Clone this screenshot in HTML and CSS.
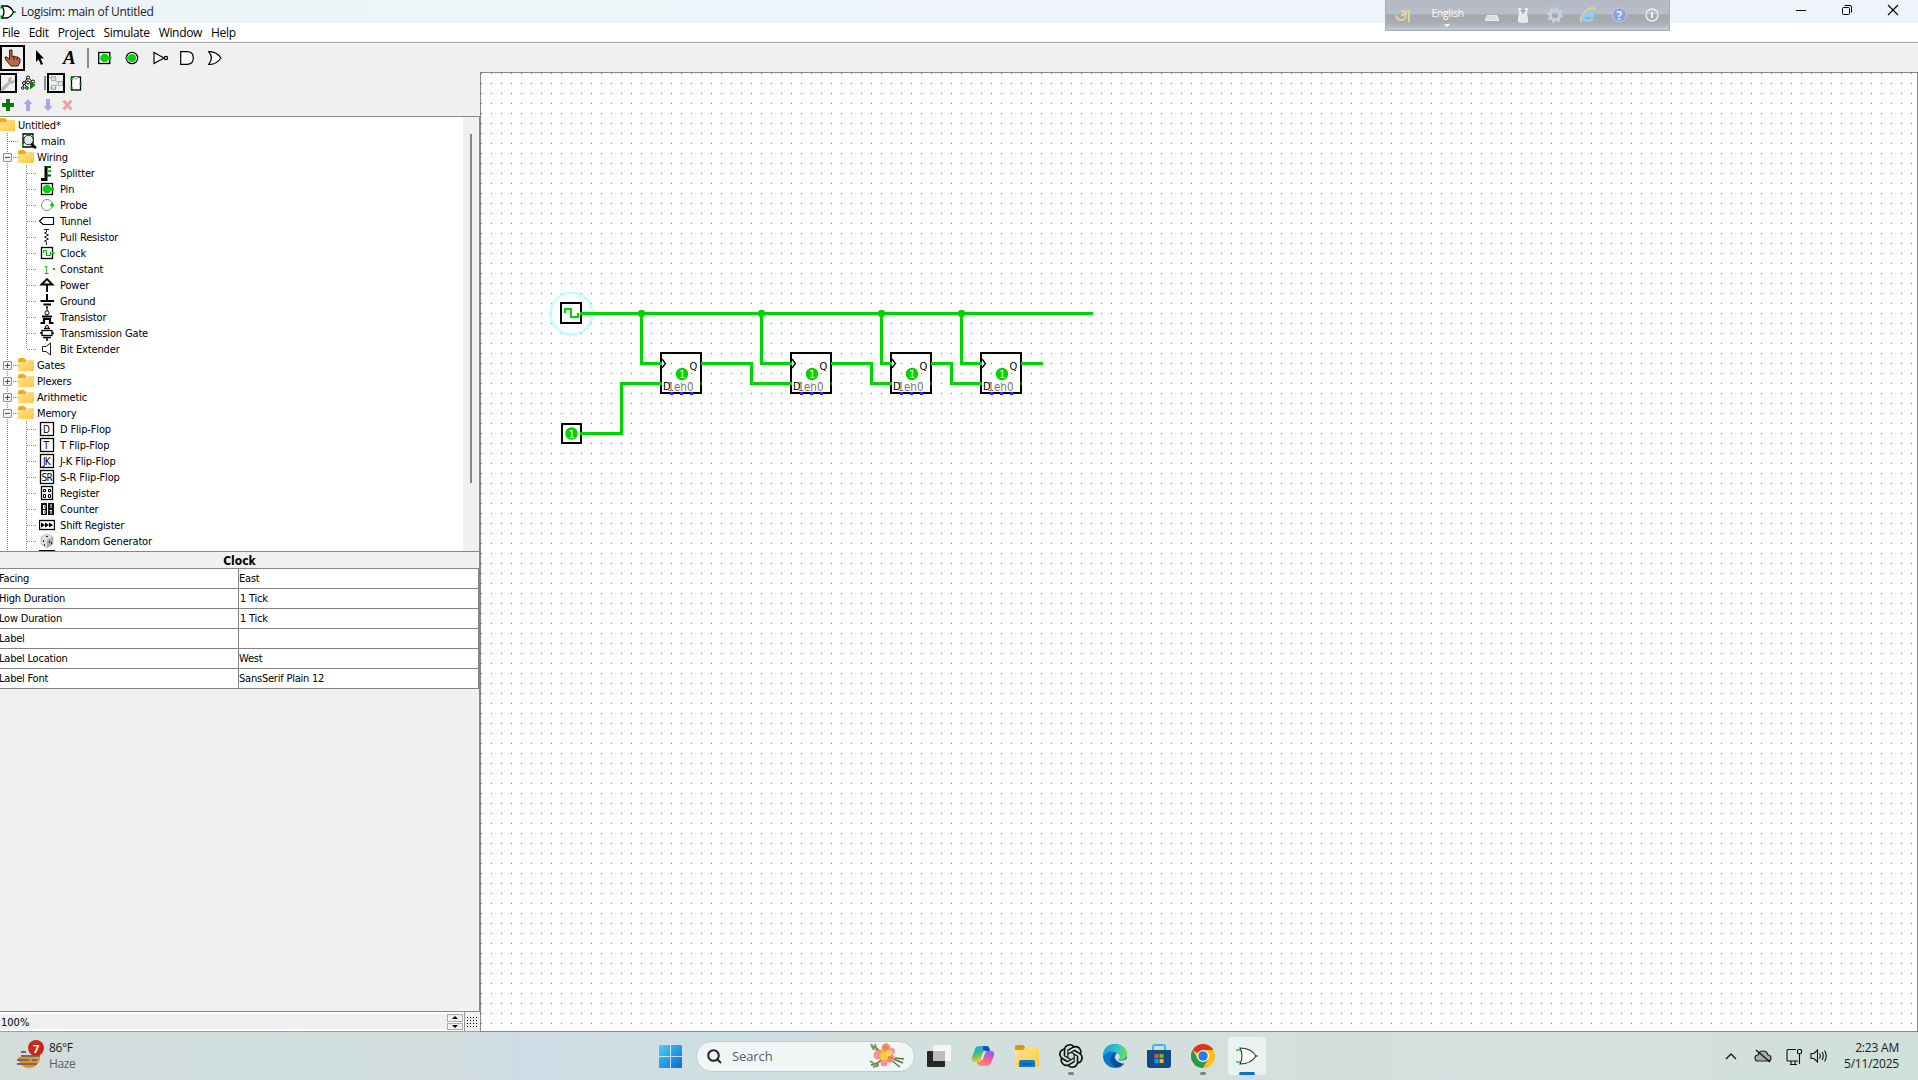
FILE: index.html
```html
<!DOCTYPE html>
<html lang="en">
<head>
<meta charset="utf-8">
<title>Logisim: main of Untitled</title>
<link rel="stylesheet" href="styles.css">
</head>
<body>
<svg class="defs" aria-hidden="true">
  <defs>
    <linearGradient id="gFolder" x1="0" y1="0" x2="1" y2="1"><stop offset="0" stop-color="#ffe59a"/><stop offset="1" stop-color="#fdc83c"/></linearGradient>
    <linearGradient id="gWin" x1="0" y1="0" x2="1" y2="1"><stop offset="0" stop-color="#4cd0fb"/><stop offset="1" stop-color="#0669cf"/></linearGradient>
    <symbol id="folder" viewBox="0 0 16 14"><path d="M0 2Q0 0 2 0H6L8 2V5H0Z" fill="#f3ac10"/><path d="M0 4H7L9 2H16V12Q16 13 15 13H1Q0 13 0 12Z" fill="url(#gFolder)"/></symbol>
    <symbol id="flipflop" viewBox="0 0 42 44">
      <rect x="1" y="1" width="40" height="40" fill="none" stroke="#000" stroke-width="2"/>
      <path d="M2 7L5.5 11.5L2 16" fill="none" stroke="#000" stroke-width="1.3"/>
      <text x="29.5" y="17.500" class="port">Q</text><text x="3" y="37.500" class="port">D</text>
      <text x="7.5" y="38.500" class="pin-name">1</text><text x="14" y="38.500" class="pin-name">en</text><text x="27" y="38.500" class="pin-name">0</text>
      <circle cx="22" cy="22" r="6.2" fill="#00d400"/><text x="19" y="26" class="value">1</text>
      <path d="M10 40h3v3h-3zM20 40h3v3h-3zM30 40h3v3h-3z" fill="#2828ff"/><path d="M40 30h2v3h-2z" fill="#006400"/>
    </symbol>
  </defs>
</svg>

<header class="titlebar">
  <svg class="app-icon" width="16" height="16" viewBox="0 0 16 16" fill="none"><path d="M0 3.5H4M0 12.5H4" stroke="#00d400" stroke-width="2"/><path d="M13 8h3" stroke="#00d400" stroke-width="2"/><path d="M2 2H7Q11 3 13.5 8Q11 13 7 14H2Q6 8 2 2Z" fill="#fff" stroke="#000" stroke-width="1.3"/></svg>
  <span class="title">Logisim: main of Untitled</span>
  <div class="window-controls">
    <svg width="12" height="12" viewBox="0 0 12 12"><path d="M1 6.500H11" stroke="#000"/></svg>
    <svg width="12" height="12" viewBox="0 0 12 12" fill="none" stroke="#000"><rect x="1.500" y="3.500" width="7" height="7" rx="1"/><path d="M3.500 1.500H9Q10.500 1.500 10.500 3V8.500"/></svg>
    <svg width="12" height="12" viewBox="0 0 12 12"><path d="M1 1L11 11M11 1L1 11" stroke="#000" stroke-width="1.100"/></svg>
  </div>
</header>

<div class="language-bar">
  <svg width="16" height="18" viewBox="0 0 16 18" fill="none" stroke="#ead79d" stroke-width="1.800"><path d="M6 5Q9 4 9 7Q9 9.500 6 9.500M1 9.500Q2 14 6.500 14Q11 14 10.500 9Q10 4.500 13.500 5M13.800 4V16"/></svg>
  <div class="lang"><span>English</span><i></i></div>
  <svg width="16" height="18" viewBox="0 0 16 18"><path d="M3 9H13L15 13V15H1V13Z" fill="#e8ebef"/><path d="M3 11H13M2.500 13H13.500" stroke="#aeb4bd" stroke-dasharray="1 1"/></svg>
  <svg width="16" height="18" viewBox="0 0 16 18"><path d="M3 2H6L7 5H9L10 2H13L12 8L13 12V16Q8 18 3 16V12L4 8Z" fill="#e8ebed"/><path d="M8 4V8M6 4L7 6M10 4L9 6" stroke="#858b91"/></svg>
  <svg width="18" height="18" viewBox="0 0 18 18" fill="none" stroke="#c3d3e0"><circle cx="9" cy="9" r="4.800" stroke-width="3"/><circle cx="9" cy="9" r="7" stroke-width="2" stroke-dasharray="2.750 2.750"/></svg>
  <svg width="18" height="18" viewBox="0 0 18 18" fill="none"><path d="M14 12Q12 15 9 15Q4 15 4 9.500Q4 4 9 4Q14 4 14 9.500H5" stroke="#8fd0f3" stroke-width="2.800"/><path d="M3 16Q-1 11 7 5Q15 -1 16 4" stroke="#e6cf8d" stroke-width="1.800"/></svg>
  <svg width="18" height="18" viewBox="0 0 18 18"><circle cx="8.500" cy="9" r="7" fill="#8fa2da" stroke="#c0c9e2"/><text x="5.500" y="13.500" class="help-mark">?</text></svg>
  <svg width="16" height="18" viewBox="0 0 16 18" fill="none" stroke="#f0f2f4"><circle cx="8" cy="9" r="6" stroke-width="1.400"/><path d="M8 6V12" stroke-width="2"/></svg>
</div>

<nav class="menubar"><span>File</span><span>Edit</span><span>Project</span><span>Simulate</span><span>Window</span><span>Help</span></nav>

<div class="workspace">
  <div class="toolbar">
    <span class="tool selected"><svg width="17" height="18" viewBox="0 0 17 18"><path d="M5.500 1H8V8L10 7L12 8L14 8L16 10V13L14 17H7L2 11L1 8L3 8L5.500 10.500Z" fill="#b86b4b" stroke="#3f1d10"/><path d="M10 8V11M13 9V11" stroke="#3f1d10"/></svg></span>
    <svg class="t-arrow" width="10" height="16" viewBox="0 0 10 16"><path d="M1 0V12L3.500 9.500L6 15L8 14L5.500 8.500H9Z" fill="#000"/></svg>
    <span class="text-tool">A</span>
    <i class="divider"></i>
    <svg class="t-in" width="14" height="14" viewBox="0 0 14 14"><rect x=".75" y="1.500" width="11" height="11" fill="#fff" stroke="#000" stroke-width="1.300"/><circle cx="6.500" cy="7" r="4.300" fill="#00d400"/><path d="M9 7H13.500" stroke="#00d400" stroke-width="2.500"/></svg>
    <svg class="t-out" width="14" height="14" viewBox="0 0 14 14"><circle cx="7" cy="7" r="5.700" fill="#fff" stroke="#000" stroke-width="1.200"/><circle cx="7" cy="7" r="4" fill="#00d400"/><path d="M0 7H4" stroke="#00d400" stroke-width="2"/></svg>
    <svg class="t-not" width="16" height="14" viewBox="0 0 16 14" fill="#fff" stroke="#000" stroke-width="1.200"><path d="M1 1.500L11 7L1 12.500Z"/><circle cx="13" cy="7" r="1.600"/></svg>
    <svg class="t-and" width="14" height="14" viewBox="0 0 14 14" fill="#fff" stroke="#000" stroke-width="1.200"><path d="M.7 .7H7Q13.300 .7 13.300 7Q13.300 13.300 7 13.300H.7Z"/></svg>
    <svg class="t-or" width="14" height="14" viewBox="0 0 14 14" fill="#fff" stroke="#000" stroke-width="1.200"><path d="M.7 .7Q8 0 13 7Q8 14 .7 13.300Q6 7 .7 .7Z"/></svg>
  </div>

  <aside class="explorer">
    <div class="view-bar">
      <span class="tool small selected"><svg width="15" height="15" viewBox="0 0 15 15"><path d="M0 12L7 6Q6 1 11 1L10 4L12 5L14 3Q15 8 9 8L3 14.500H0Z" fill="#b5b5b5"/></svg></span>
      <svg class="v-sim" width="15" height="16" viewBox="0 0 15 16" fill="#fff" stroke="#000"><path d="M1.500 13L3 8L7 2.500L13 8M3 8L6 13" fill="none"/><circle cx="7" cy="2.500" r="1.500"/><circle cx="3" cy="8" r="1.500"/><circle cx="7" cy="7.500" r="1.500"/><circle cx="12" cy="6.500" r="1.500"/><circle cx="1.800" cy="13" r="1.300"/><circle cx="6" cy="13" r="1.300"/><path d="M9 6L14.500 10L9 14.500Z" fill="#087d08" stroke="none"/></svg>
      <i class="divider"></i>
      <span class="tool small selected"><svg width="14" height="15" viewBox="0 0 14 15" fill="none" stroke="#aaa"><path d="M0 2H7V6H12M0 12H7V9H10" stroke="#9bcf9b"/><rect x="2.500" y=".5" width="4" height="4"/><rect x="2.500" y="9.500" width="4" height="4"/><rect x="9.500" y="5.500" width="4" height="4"/></svg></span>
      <svg class="v-layout" width="12" height="15" viewBox="0 0 12 15" fill="#fff"><rect x="1.500" y="1" width="9" height="13" stroke="#000" stroke-width="1.300"/><path d="M4 1Q6 5 8 1" stroke="#999"/><path d="M0 3H3M0 12H3M9.500 8H12" stroke="#00c800" stroke-width="1.600"/></svg>
    </div>
    <div class="edit-bar">
      <svg width="12" height="12" viewBox="0 0 12 12"><path d="M4 0H8V4H12V8H8V12H4V8H0V4H4Z" fill="#087a08"/></svg>
      <svg width="12" height="12" viewBox="0 0 12 12"><path d="M6 0L10.500 5H8V12H4V5H1.500Z" fill="#a7a5ee"/></svg>
      <svg width="12" height="12" viewBox="0 0 12 12"><path d="M6 12L10.500 7H8V0H4V7H1.500Z" fill="#a7a5ee"/></svg>
      <svg width="12" height="12" viewBox="0 0 12 12"><path d="M1.500 1.500L9.500 10.500M9.500 1.500L1.500 10.500" stroke="#eea3a3" stroke-width="3"/></svg>
    </div>

    <div class="tree-pane">
      <ul class="tree">
        <li class="root"><svg><use href="#folder" width="16" height="14"/></svg>Untitled*</li>
        <li class="main"><svg viewBox="0 0 16 16"><path d="M1 1H11V14H1Z" fill="#fff" stroke="#000" stroke-width="1.400"/><path d="M0 3H2M0 12H2M10 3H12" stroke="#00c800" stroke-width="2"/><circle cx="6.500" cy="7" r="4.800" fill="#dbe8f5" stroke="#222"/><path d="M9 11L14 15" stroke="#000" stroke-width="2.500"/></svg>main</li>
        <li class="lib open"><b></b><svg><use href="#folder" width="16" height="14"/></svg>Wiring</li>
        <li class="leaf"><svg viewBox="0 0 16 16"><path d="M2 14.500H7V1" stroke="#000" stroke-width="3" fill="none"/><path d="M7 2H12M7 10.500H12" stroke="#064f06" stroke-width="2"/><path d="M8 6H12" stroke="#00d400" stroke-width="2"/></svg>Splitter</li>
        <li class="leaf"><svg viewBox="0 0 16 16"><rect x="2.500" y="2.500" width="11" height="11" fill="#fff" stroke="#000" stroke-width="1.300"/><circle cx="8" cy="8" r="4.300" fill="#00d400"/><path d="M10 8H15" stroke="#00d400" stroke-width="2.500"/></svg>Pin</li>
        <li class="leaf"><svg viewBox="0 0 16 16"><circle cx="8" cy="8" r="5.500" fill="#fff" stroke="#888"/><path d="M11 8L13 5.500L15.500 8L13 10.500Z" fill="#00d400"/></svg>Probe</li>
        <li class="leaf"><svg viewBox="0 0 16 16"><path d="M14.500 4.500H4L.5 8L4 11.500H14.500Z" fill="#fff" stroke="#000" stroke-width="1.200"/></svg>Tunnel</li>
        <li class="leaf"><svg viewBox="0 0 16 16"><path d="M5 .5H10M7.500 1V3L5.500 4L9.500 6L5.500 8L9.500 10L5.500 12L7.500 13V16" fill="none" stroke="#222"/></svg>Pull Resistor</li>
        <li class="leaf"><svg viewBox="0 0 16 16"><rect x="2.500" y="2.500" width="11" height="11" fill="#fff" stroke="#000" stroke-width="1.300"/><path d="M4.500 8V5.500H7.500V10.500H11.500V7" fill="none" stroke="#00b000"/><path d="M13 8H15.500" stroke="#00d400" stroke-width="2"/></svg>Clock</li>
        <li class="leaf"><svg viewBox="0 0 16 16"><text x="4.500" y="12.500" class="const">1</text><path d="M14 8H16" stroke="#00c800" stroke-width="2"/></svg>Constant</li>
        <li class="leaf"><svg viewBox="0 0 16 16"><path d="M8 15V7M2.500 7.500L8 2L13.500 7.500Z" fill="#fff" stroke="#000" stroke-width="1.800"/></svg>Power</li>
        <li class="leaf"><svg viewBox="0 0 16 16"><path d="M8 1V8M1.500 8H15M4.500 11.500H12M7 14.500H9" stroke="#000" stroke-width="2"/></svg>Ground</li>
        <li class="leaf"><svg viewBox="0 0 16 16"><path d="M1.500 14H5V10H11V14H14.500M3 7.500H13" fill="none" stroke="#000" stroke-width="2.200"/><path d="M8 0V6" stroke="#000"/><circle cx="8" cy="3.800" r="2" fill="#fff" stroke="#000"/></svg>Transistor</li>
        <li class="leaf"><svg viewBox="0 0 16 16"><rect x="3" y="5.500" width="10" height="5" fill="#fff" stroke="#000" stroke-width="1.300"/><path d="M1 8H3M13 8H15M4 12.500H12M8 13V16M5 3.500H11" stroke="#000" stroke-width="1.500"/><circle cx="8" cy="2" r="1.500" fill="#fff" stroke="#000"/></svg>Transmission Gate</li>
        <li class="leaf last"><svg viewBox="0 0 16 16"><path d="M3.500 5.500H7L11.500 2V14L7 10.500H3.500Z" fill="#fff" stroke="#222"/></svg>Bit Extender</li>
        <li class="lib"><b></b><svg><use href="#folder" width="16" height="14"/></svg>Gates</li>
        <li class="lib"><b></b><svg><use href="#folder" width="16" height="14"/></svg>Plexers</li>
        <li class="lib"><b></b><svg><use href="#folder" width="16" height="14"/></svg>Arithmetic</li>
        <li class="lib open"><b></b><svg><use href="#folder" width="16" height="14"/></svg>Memory</li>
        <li class="leaf"><svg viewBox="0 0 16 16"><rect class="chip" x="1.500" y="1.500" width="13" height="13"/><text x="4" y="12" class="chip-text">D</text></svg>D Flip-Flop</li>
        <li class="leaf"><svg viewBox="0 0 16 16"><rect class="chip" x="1.500" y="1.500" width="13" height="13"/><text x="4.500" y="12" class="chip-text">T</text></svg>T Flip-Flop</li>
        <li class="leaf"><svg viewBox="0 0 16 16"><rect class="chip" x="1.500" y="1.500" width="13" height="13"/><text x="4" y="12" class="chip-text">JK</text></svg>J-K Flip-Flop</li>
        <li class="leaf"><svg viewBox="0 0 16 16"><rect class="chip" x="1.500" y="1.500" width="13" height="13"/><text x="2.500" y="12" class="chip-text">SR</text></svg>S-R Flip-Flop</li>
        <li class="leaf"><svg viewBox="0 0 16 16"><rect class="chip" x="2.500" y="1.500" width="11" height="13"/><path d="M4.500 4.500h2v2h-2zM9.500 4.500h2v2h-2zM4.500 9.500h2v3h-2zM9.500 9.500h2v3h-2z" fill="none" stroke="#000"/></svg>Register</li>
        <li class="leaf"><svg viewBox="0 0 16 16"><path d="M2 2H8V14H2ZM9 2H15V14H9Z" fill="#111"/><path d="M4.500 4.500h1.500v3h-1.500zM4.500 9.500h1.500v3h-1.500zM12 3V7M10.500 9.500H13M12 10V13" fill="none" stroke="#fff"/></svg>Counter</li>
        <li class="leaf"><svg viewBox="0 0 16 16"><rect class="chip" x=".5" y="3.500" width="15" height="9"/><path d="M2 5.500L6 8L2 10.500ZM6 5.500L10 8L6 10.500ZM10 5.500L14 8L10 10.500Z" fill="#000"/></svg>Shift Register</li>
        <li class="leaf"><svg viewBox="0 0 16 16"><path d="M2 4L8 1L14 4V11L8 15L2 11Z" fill="#ddd" stroke="#aaa" stroke-width=".6"/><path d="M8 7V15L14 11V4Z" fill="#aaa"/><path d="M7 3h2v1H7zM4 7h1v2H4zM5 11h1v2H5zM10 8h1v2h-1zM12 9h1v2h-1z" fill="#222"/></svg>Random Generator</li>
        <li class="leaf"><svg viewBox="0 0 16 16"><rect x="0" y="1" width="16" height="2"/></svg></li>
      </ul>
      <div class="scrollbar"><i></i></div>
    </div>

    <div class="attributes">
      <h2>Clock</h2>
      <dl>
        <dt>Facing</dt><dd>East</dd>
        <dt>High Duration</dt><dd class="num">1 Tick</dd>
        <dt>Low Duration</dt><dd class="num">1 Tick</dd>
        <dt>Label</dt><dd></dd>
        <dt>Label Location</dt><dd>West</dd>
        <dt>Label Font</dt><dd>SansSerif Plain 12</dd>
      </dl>
    </div>

    <div class="zoom-bar">
      <div class="zoom-value">100%</div>
      <div class="spinner"><span><svg width="6" height="3" viewBox="0 0 6 3"><path d="M0 3L3 0L6 3Z"/></svg></span><span><svg width="6" height="3" viewBox="0 0 6 3"><path d="M0 0H6L3 3Z"/></svg></span></div>
      <div class="grid-toggle"><i></i></div>
    </div>
  </aside>

  <main class="canvas">
    <svg width="1435" height="958" viewBox="0 0 1435 958">
      <defs><pattern id="dots" width="10" height="10" patternUnits="userSpaceOnUse"><rect width="1" height="1" fill="#777"/></pattern></defs>
      <rect width="1435" height="958" fill="url(#dots)"/>
      <circle cx="90.500" cy="240.500" r="21" fill="none" stroke="#bfffff" stroke-width="2.500"/>
      <rect x="80" y="230" width="20" height="20" fill="#fff" stroke="#000" stroke-width="2"/>
      <rect x="81" y="351" width="19" height="19" fill="#fff" stroke="#000" stroke-width="2"/>
      <use href="#flipflop" x="179" y="279" width="42" height="44"/>
      <use href="#flipflop" x="309" y="279" width="42" height="44"/>
      <use href="#flipflop" x="409" y="279" width="42" height="44"/>
      <use href="#flipflop" x="499" y="279" width="42" height="44"/>
      <g fill="none" stroke="#00d400" stroke-width="3">
        <path d="M99 240.500H612M160.500 240V290.500H181M280.500 240V290.500H311M400.500 240V290.500H411M480.500 240V290.500H501"/>
        <path d="M99 360.500H140.500V310.500H181M220 290.500H270.500V310.500H311M350 290.500H390.500V310.500H411M450 290.500H470.500V310.500H501M540 290.500H562"/>
        <path d="M84 240V236H90V244H97V240" stroke-width="2"/>
      </g>
      <g fill="#00d400"><circle cx="160.500" cy="240.500" r="3.700"/><circle cx="280.500" cy="240.500" r="3.700"/><circle cx="400.500" cy="240.500" r="3.700"/><circle cx="480.500" cy="240.500" r="3.700"/><circle cx="90.500" cy="360.500" r="6.200"/></g>
      <text x="87.500" y="364.500" class="value">1</text>
    </svg>
  </main>
</div>

<footer class="taskbar">
  <div class="weather">
    <svg width="28" height="30" viewBox="0 0 28 30"><circle cx="12" cy="17" r="11" fill="#f08c1c"/><path d="M0 4H24V17H0Z" fill="#d4dddc"/><path d="M12 19Q20 17 22 14L23 18Z" fill="#f4a62a"/><path d="M4 12H9M4 16H23M0 20H12M15 20H20M0 24H20" stroke="#6b6b6b" stroke-width="1.800"/><circle cx="19" cy="8" r="8" fill="#c5281c"/><text x="16" y="12.500" class="badge">7</text></svg>
    <div><span>86°F</span><span class="muted">Haze</span></div>
  </div>

  <div class="apps">
    <svg class="start" width="23" height="23" viewBox="0 0 23 23"><path d="M0 1Q0 0 1 0H11V11H0ZM12 0H22Q23 0 23 1V11H12ZM0 12H11V23H1Q0 23 0 22ZM12 12H23V22Q23 23 22 23H12Z" fill="url(#gWin)"/></svg>
    <div class="search">
      <svg width="15" height="15" viewBox="0 0 15 15" fill="none" stroke="#242424" stroke-width="2"><circle cx="6.500" cy="6.500" r="5.300"/><path d="M10.500 10.500L14 14"/></svg>
      <span>Search</span>
      <svg width="36" height="26" viewBox="0 0 36 26"><path d="M2 3Q8 4 12 10M2 22Q9 21 13 16M22 15L34 20M22 17L31 24M26 15L35 16" fill="none" stroke="#54793f" stroke-width="1.500"/><path d="M2 1L5 7M6 1L8 8M1 18L7 22M4 24L10 22M8 24L9 19" stroke="#7d9a5a" stroke-width="2"/><g fill="#f890a4"><circle cx="9" cy="12" r="4.500"/><circle cx="15" cy="20" r="3.500"/><circle cx="23" cy="8" r="3"/></g><g fill="#f5905e"><circle cx="17" cy="5" r="4.500"/><circle cx="21" cy="15" r="4.500"/><circle cx="11" cy="9" r="2.500"/></g><circle cx="15" cy="13" r="4.500" fill="#f8c938"/><circle cx="20" cy="10" r="3" fill="#ffd95a"/><path d="M19 15Q22 13 23 16M15 4Q18 3 18 6" fill="none" stroke="#d96c3f"/></svg>
    </div>
    <svg class="task-view" width="24" height="22" viewBox="0 0 24 22"><rect y="6" width="18" height="16" rx="1" fill="#262626"/><rect x="6" width="18" height="16" rx="1" fill="#f5f5f5"/><path d="M6 6H18V16H6Z" fill="#bdbdbd"/></svg>
    <svg class="copilot" width="24" height="22" viewBox="0 0 24 22"><defs><linearGradient id="c1" x2=".3" y2="1"><stop stop-color="#1aa9ed"/><stop offset=".5" stop-color="#3fbc86"/><stop offset="1" stop-color="#f2cc1d"/></linearGradient><linearGradient id="c2" x1=".5" x2=".2" y2="1"><stop stop-color="#9b5cf2"/><stop offset=".5" stop-color="#ee609e"/><stop offset="1" stop-color="#ff9a50"/></linearGradient></defs><path d="M8 1H16Q18 1 19 5H16Q13 5 12 8L10 15Q9 17 6 17H3Q0 17 1 12L4 4Q5 1 8 1Z" fill="url(#c1)"/><path d="M12 1H16Q18 1 19 6H16Q13 6 12 5Z" fill="#174fca"/><path d="M17 6H20Q24 6 23 11L20 18Q19 21 16 21H9Q7 21 6 17Q10 17 11 14L13 9Q14 6 17 6Z" fill="url(#c2)"/><path d="M12.500 7H14.500L11.500 15H9.500Z" fill="#e4ebea"/></svg>
    <svg class="files" width="24" height="22" viewBox="0 0 24 22"><path d="M0 2Q0 0 2 0H8L10 2V7H0Z" fill="#dc9707"/><path d="M0 5H8L11 2H22Q24 2 24 4V22H0Z" fill="url(#gFolder)"/><path d="M4 17Q4 15 6 15H18Q20 15 20 17V22H4Z" fill="#1278cb"/><path d="M7 19H17" stroke="#0b5a9f" stroke-width="1.500"/></svg>
    <span class="app running"><svg width="24" height="24" viewBox="0 0 24 24"><path fill="#0a0a0a" d="M22.282 9.821a5.985 5.985 0 0 0-.516-4.910 6.046 6.046 0 0 0-6.510-2.900A6.065 6.065 0 0 0 4.981 4.182a5.985 5.985 0 0 0-3.998 2.900 6.046 6.046 0 0 0 .743 7.097 5.980 5.980 0 0 0 .511 4.911 6.051 6.051 0 0 0 6.515 2.900A5.985 5.985 0 0 0 13.260 24a6.056 6.056 0 0 0 5.772-4.206 5.990 5.990 0 0 0 3.998-2.900 6.056 6.056 0 0 0-.747-7.073zM13.260 22.430a4.476 4.476 0 0 1-2.876-1.041l.142-.080 4.778-2.758a.795.795 0 0 0 .393-.681v-6.737l2.020 1.169a.071.071 0 0 1 .038.052v5.583a4.504 4.504 0 0 1-4.495 4.493zM3.600 18.304a4.471 4.471 0 0 1-.535-3.014l.142.085 4.783 2.759a.771.771 0 0 0 .781 0l5.843-3.369v2.332a.080.080 0 0 1-.033.062L9.740 19.950a4.499 4.499 0 0 1-6.140-1.646zM2.341 7.896a4.485 4.485 0 0 1 2.366-1.973V11.600a.766.766 0 0 0 .388.676l5.814 3.355-2.020 1.168a.076.076 0 0 1-.071 0l-4.830-2.786A4.504 4.504 0 0 1 2.341 7.872zm16.596 3.856l-5.833-3.387L15.119 7.200a.076.076 0 0 1 .071 0l4.830 2.791a4.494 4.494 0 0 1-.676 8.105v-5.678a.790.790 0 0 0-.407-.667zm2.010-3.023l-.141-.085-4.774-2.782a.776.776 0 0 0-.785 0L9.409 9.230V6.897a.066.066 0 0 1 .028-.061l4.830-2.787a4.499 4.499 0 0 1 6.680 4.660zM8.307 12.863l-2.020-1.164a.080.080 0 0 1-.038-.057V6.075a4.499 4.499 0 0 1 7.376-3.454l-.142.081L8.704 5.460a.795.795 0 0 0-.393.681zm1.097-2.366l2.602-1.500 2.607 1.500v2.999l-2.597 1.500-2.607-1.500z"/></svg></span>
    <svg class="edge" width="24" height="24" viewBox="0 0 24 24"><defs><linearGradient id="e1" x2="1" y2=".2"><stop stop-color="#159ee4"/><stop offset=".6" stop-color="#2fc5c6"/><stop offset="1" stop-color="#68dc59"/></linearGradient></defs><circle cx="12" cy="12" r="12" fill="#0d76cc"/><path d="M0 12Q1 0 12 0Q24 1 24 11Q23 17 15 16Q18 12 14 9Q7 5 0 12Z" fill="url(#e1)"/><path d="M10 10Q4 17 11 22Q17 26 22 18Q17 20 13 17Q9 14 13 9Q11 8 10 10Z" fill="#0c4d94"/><path d="M14 9Q19 12 15 16Q18 18 24 15V20Q18 20 14 17Q10 13 14 9Z" fill="#d2dfdc"/></svg>
    <svg class="store" width="24" height="24" viewBox="0 0 24 24"><path d="M6 6V3Q6 1 8 1H16Q18 1 18 3V6" fill="none" stroke="#38b8ee" stroke-width="2"/><path d="M0 6H24V21Q24 24 21 24H3Q0 24 0 21Z" fill="#124a82"/><path d="M7.500 10H11.500V14H7.500Z" fill="#f25022"/><path d="M12.500 10H16.500V14H12.500Z" fill="#7fba00"/><path d="M7.500 15H11.500V19H7.500Z" fill="#00a4ef"/><path d="M12.500 15H16.500V19H12.500Z" fill="#ffb900"/></svg>
    <span class="app running"><svg width="24" height="24" viewBox="0 0 24 24"><circle cx="12" cy="12" r="12" fill="#fbc116"/><path d="M12 12L1.600 6A12 12 0 0 1 22.400 6H12Z" fill="#df3527"/><path d="M1.600 6A12 12 0 0 0 12 24L17.200 15L12 17L6.800 15Z" fill="#259c45"/><circle cx="12" cy="12" r="6" fill="#fff"/><circle cx="12" cy="12" r="4.800" fill="#3478e6"/></svg></span>
    <span class="app active"><svg width="22" height="18" viewBox="0 0 22 18"><path d="M0 3H5M0 15H5M18 9H22" stroke="#22d022" stroke-width="1.600"/><path d="M4 1Q15 1 20 9Q15 17 4 17Q8 9 4 1Z" fill="#fff" stroke="#333" stroke-width="1.100"/></svg></span>
  </div>

  <div class="tray">
    <svg class="chevron" width="12" height="8" viewBox="0 0 12 8"><path d="M1 7L6 2L11 7" fill="none" stroke="#111" stroke-width="1.300"/></svg>
    <svg class="cloud" width="18" height="14" viewBox="0 0 18 14"><path d="M4 12Q1 12 1 9Q1 6 4 6Q5 2 9 2Q13 2 14 6Q17 6 17 9Q17 12 14 12Z" fill="#aaa" stroke="#222" stroke-width="1.200"/><path d="M2 1L16 13" stroke="#111" stroke-width="1.300"/></svg>
    <svg class="network" width="17" height="17" viewBox="0 0 17 17" fill="none" stroke="#111" stroke-width="1.100"><path d="M10 1.500H2Q1 1.500 1 3V12Q1 13 2 13H12M5 13V16M9 13V16M4 16.500H11"/><rect x="11.500" y="1.500" width="4" height="4" rx="1"/><path d="M13.500 6V16"/></svg>
    <svg class="speaker" width="18" height="16" viewBox="0 0 18 16" fill="none" stroke="#111" stroke-width="1.100"><path d="M1 5.500H4L7.500 2V14L4 10.500H1Z"/><path d="M9.500 5.500Q11 8 9.500 10.500M12 4Q14.500 8 12 12M14.500 2.500Q18 8 14.500 13.500"/></svg>
    <div class="clock"><span>2:23 AM</span><span>5/11/2025</span></div>
  </div>
</footer>
</body>
</html>
```
FILE: styles.css
```css
* { box-sizing: border-box; }
body {
  margin: 0; width: 1918px; height: 1080px; overflow: hidden;
  display: flex; flex-direction: column; position: relative;
  background: #f0f0f0; color: #000;
  font: 11px/16px "DejaVu Sans Condensed", "DejaVu Sans", sans-serif;
  font-stretch: condensed;
}
svg { display: block; flex: none; }
.defs { position: absolute; width: 0; height: 0; }

.titlebar { height: 23px; flex: none; display: flex; align-items: center; background: linear-gradient(90deg, #edf4f7, #eef4fa 60%, #eff3fb); font: 12px/22px "Open Sans", "Noto Sans", sans-serif; }
.title { margin-left: 5px; color: #222; letter-spacing: -0.28px; }
.window-controls { margin-left: auto; margin-right: 19px; display: flex; gap: 34px; padding-bottom: 3px; }

.language-bar {
  position: absolute; left: 1385px; top: 0; width: 285px; height: 31px;
  background: linear-gradient(#b3b8c4, #b9bec9 45%, #a5a8ac 50%, #a8abb1 75%, #c6cad8);
  border: 1px solid #a6abb8; border-top: 0;
  display: flex; align-items: center; justify-content: space-between; padding: 0 9px;
}
.lang { width: 42px; color: #fff; font: 10px/12px "Open Sans", sans-serif; display: flex; flex-direction: column; align-items: center; gap: 5px; padding-top: 4px; }
.lang span { letter-spacing: -0.1px; padding-left: 2px; }
.lang i { border: 3px solid transparent; border-top-color: #fff; border-bottom: 0; }
.language-bar .lang { margin-right: 2px; }
.help-mark { font: bold 12px "Open Sans", sans-serif; fill: #e8ecf8; }

.menubar { height: 20px; flex: none; display: flex; gap: 9px; padding-left: 2px; background: #fff; border-bottom: 1px solid #a0a0a0; font: 12px/20px "Open Sans", "Noto Sans", sans-serif; letter-spacing: -0.33px; }

.workspace { flex: 1; min-height: 0; display: grid; grid-template: 29px 1fr / 480px 1fr; }
.toolbar { grid-column: 1 / 3; display: flex; align-items: center; border-top: 1px solid #fff; }
.tool { display: flex; align-items: center; justify-content: center; width: 25px; height: 26px; }
.tool.small { width: 18px; height: 20px; }
.tool.selected { border: 2px solid #000; }
.tool.small:first-child { width: 17px; border-left: 1px solid #000; }
.divider { width: 2px; height: 20px; background: #888; }
.view-bar .divider { height: 14px; }
.t-arrow { margin-left: 10px; }
.text-tool { margin-left: 18px; width: 12px; font: italic bold 19px/20px "Liberation Serif", serif; }
.toolbar .divider { margin-left: 12px; }
.t-in { margin-left: 9px; }
.t-out { margin-left: 13px; }
.t-not { margin-left: 14px; }
.t-and { margin-left: 11px; }
.t-or { margin-left: 14px; }

.explorer { display: flex; flex-direction: column; min-height: 0; }
.view-bar { height: 22px; display: flex; align-items: center; }
.v-sim { margin: 0 8px 0 4px; }
.view-bar .divider + .tool { margin-left: 1px; }
.v-layout { margin-left: 5px; }
.edit-bar { height: 22px; display: flex; align-items: center; gap: 8px; padding-left: 2px; }

.tree-pane { height: 435px; flex: none; display: flex; border-top: 1px solid #828790; border-right: 1px solid #828790; background: #fff; overflow: hidden; }
.tree { flex: 1; margin: 0; padding: 0; list-style: none; }
.tree li {
  height: 16px; padding-top: 2px; display: flex; align-items: center; white-space: nowrap; letter-spacing: -0.15px;
  --v: repeating-linear-gradient(#888 0 1px, transparent 1px 2px);
  --h: repeating-linear-gradient(90deg, #888 0 1px, transparent 1px 2px);
  background: var(--v) 7px 0 / 1px 16px no-repeat;
}
.tree svg { width: 16px; height: 16px; margin: -2px 4px 0 0; }
.tree .root { background: none; }
.tree .root svg { margin: 0 3px 0 -1px; }
.tree .main { padding-left: 22px; background: var(--v) 7px 0 / 1px 16px no-repeat, var(--h) 9px 8px / 9px 1px no-repeat; }
.tree .main svg { margin-right: 3px; }
.tree .lib { padding-left: 3px; background: var(--v) 7px 0 / 1px 16px no-repeat, var(--h) 13px 8px / 5px 1px no-repeat; }
.tree .lib svg { margin: 0 3px 0 0; }
.lib b { width: 9px; height: 9px; margin: -1px 6px 0 0; border: 1px solid #8e8f8f; border-radius: 1px;
  background: linear-gradient(#385a9c, #385a9c) center / 5px 1px no-repeat, linear-gradient(#385a9c, #385a9c) center / 1px 5px no-repeat, #f2f2f2; }
.lib.open b { background: linear-gradient(#385a9c, #385a9c) center / 5px 1px no-repeat, #f2f2f2; }
.tree .leaf { padding-left: 39px; background: var(--v) 7px 0 / 1px 16px no-repeat, var(--v) 26px 0 / 1px 16px no-repeat, var(--h) 27px 8px / 9px 1px no-repeat; }
.tree .leaf svg { margin-right: 5px; }
.tree .last { background: var(--v) 7px 0 / 1px 16px no-repeat, var(--v) 26px 0 / 1px 8px no-repeat, var(--h) 27px 8px / 9px 1px no-repeat; }
.chip { fill: #fff; stroke: #000; stroke-width: 1.3px; }
.chip-text { font-size: 10px; letter-spacing: -0.8px; }
.const { font-size: 10px; fill: #00b000; }
.scrollbar { width: 16px; background: #f0f0f0; padding: 17px 0 0 7px; }
.scrollbar i { display: block; width: 2px; height: 349px; background: #858585; }

.attributes { flex: 1; min-height: 0; border-top: 1px solid #828790; border-right: 1px solid #828790; }
.attributes h2 { margin: 0; height: 16px; font-size: 12px; line-height: 18px; text-align: center; }
.attributes dl { margin: 0; display: grid; grid-template-columns: 239px 240px; grid-auto-rows: 20px; border-top: 1px solid #828790; background: #fff; line-height: 19px; letter-spacing: -0.22px; }
dt, dd { margin: 0; border-right: 1px solid #828282; border-bottom: 1px solid #828282; white-space: pre; }
dt { text-indent: -1px; }
dd.num { padding-left: 1px; }

.zoom-bar { height: 21px; flex: none; display: flex; border-top: 1px solid #828790; border-bottom: 1px solid #a0a0a0; background: #fff; }
.zoom-value { flex: 1; margin: 2px 0; padding-left: 1px; background: #f0f0f0; line-height: 17px; }
.spinner { width: 16px; margin-right: 1px; display: flex; flex-direction: column; gap: 1px; padding: 2px 0 1px; }
.spinner span { flex: 1; display: flex; align-items: center; justify-content: center; border: 1px solid #aaa; background: #f0f0f0; }
.grid-toggle { width: 16px; background: #f0f0f0; border-left: 1px solid #999; padding: 5px 2px; }
.grid-toggle i { display: block; width: 11px; height: 10px; background: conic-gradient(from 270deg at 1px 1px, #000 90deg, transparent 0) 0 0 / 3px 3px; }

.canvas { min-width: 0; background: #fff; border: 1px solid #828790; overflow: hidden; }
.port { font-size: 11px; }
.pin-name { font-size: 11.5px; fill: #777; }
.value { font-size: 11px; fill: #fff; }

.taskbar { height: 48px; flex: none; display: flex; align-items: center; color: #1b1b1b;
  background: linear-gradient(90deg, #d5dcdc, #d0dfdf 15%, #d3dedd 23%, #cddce5 27%, #cddfe3 34%, #d1dfde 45%, #d4dfdd 70%, #d1e0d9); font: 12px/16px "Open Sans", "Noto Sans", sans-serif; letter-spacing: -0.35px; }
.weather { width: 659px; display: flex; padding-left: 17px; gap: 4px; }
.weather div { display: flex; flex-direction: column; }
.muted { color: #5c5f60; }
.badge { font: bold 11px "Open Sans", sans-serif; fill: #fff; }
.apps { display: flex; align-items: center; height: 48px; }
.search { width: 219px; height: 31px; margin: 0 12px 0 14px; padding: 0 9px 0 10px; display: flex; align-items: center; background: #f0f5f6; border: 1px solid #bccccc; border-radius: 16px; font-size: 13px; color: #5a5d5e; }
.search span { margin: 0 auto 0 10px; letter-spacing: -0.1px; }
.copilot { margin-left: 20px; }
.files { margin-left: 20px; }
.app { position: relative; width: 38px; height: 38px; display: flex; align-items: center; justify-content: center; margin-left: 13px; }
.app::after { content: ""; position: absolute; bottom: 0; width: 6px; height: 3px; border-radius: 2px; background: #7b8283; }
.edge { margin-left: 13px; }
.store { margin-left: 20px; }
.app.active { margin-left: 6px; background: #ebf1f0; border-radius: 4px; }
.app.active::after { width: 16px; background: #0873cf; }
.tray { margin-left: auto; display: flex; align-items: center; padding-right: 19px; }
.cloud { margin-left: 17px; }
.network { margin-left: 14px; }
.speaker { margin-left: 7px; }
.clock { width: 71px; display: flex; flex-direction: column; align-items: flex-end; letter-spacing: -0.2px; }
```
